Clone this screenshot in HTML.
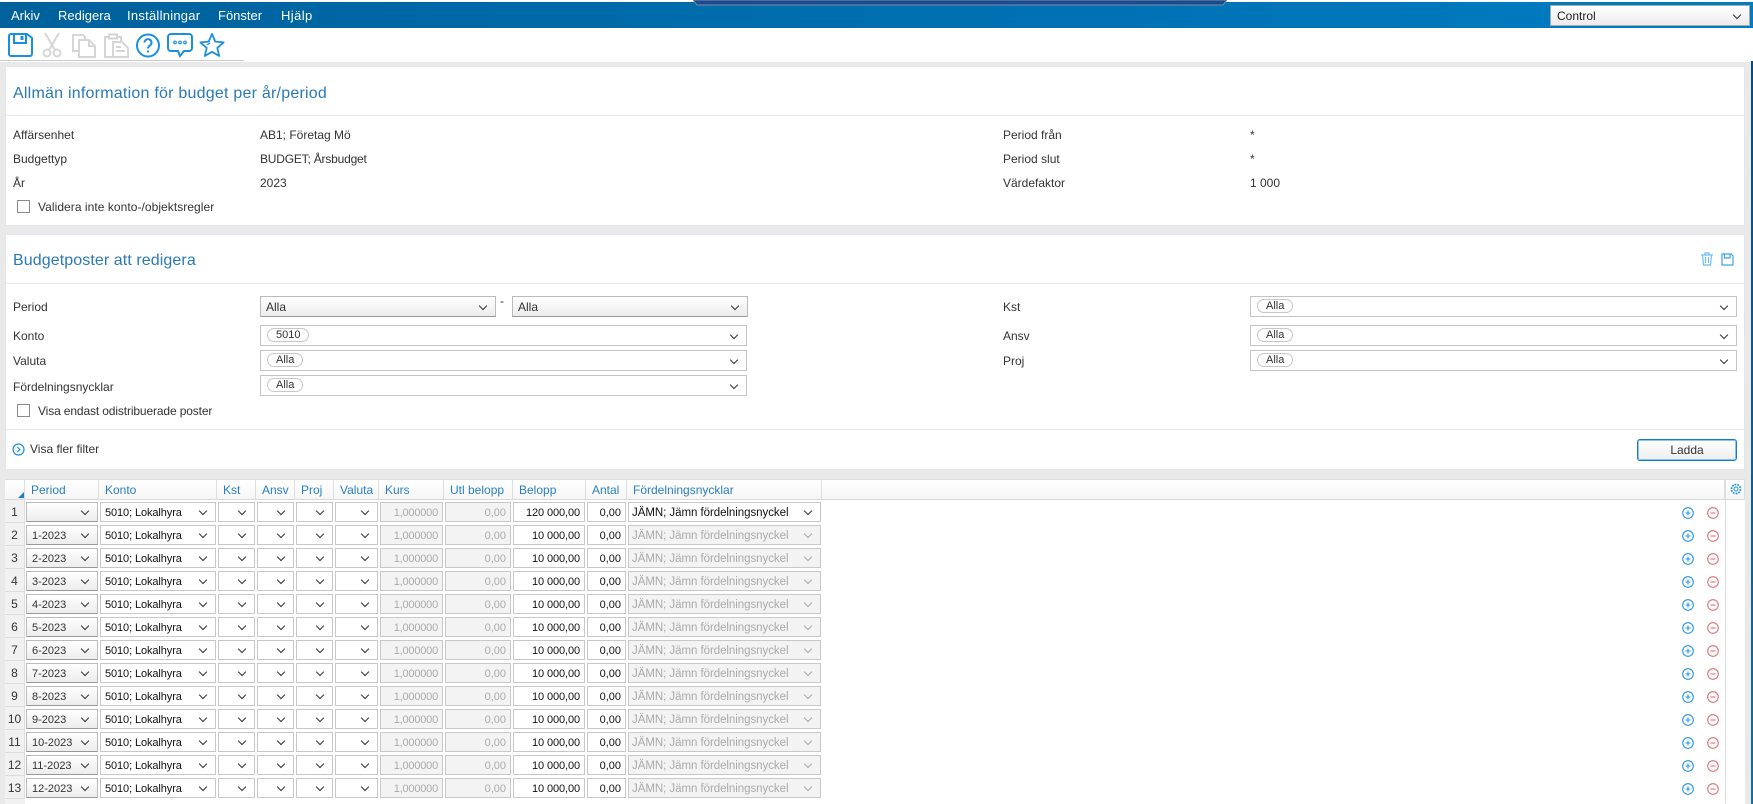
<!DOCTYPE html>
<html lang="sv"><head><meta charset="utf-8"><title>Budget</title>
<style>
html,body{margin:0;padding:0}
body{width:1753px;height:804px;overflow:hidden;background:#fff;position:relative;font:12px "Liberation Sans",sans-serif;color:#333}
div,span,svg{position:absolute;box-sizing:border-box}
.t{white-space:nowrap;line-height:16px;margin-top:1px}
#bar{left:0;top:2px;width:1753px;height:26px;background:linear-gradient(90deg,#00619c,#007cc2)}
.m{top:8px;color:#fff;font-size:13px;line-height:16px;white-space:nowrap}
.pn{left:5px;width:1740px;background:#fff;border:1px solid #e2e6ea}
.ln{left:6px;width:1738px;height:1px;background:#e6e8ea}
.h{left:13px;font-size:16px;color:#2a7ab8;line-height:20px;white-space:nowrap;margin-top:1px}
.cb{left:17px;width:13px;height:13px;border:1px solid #8a8a8a;background:#fff}
.f{left:260px;width:487px;height:21px;border:1px solid #c4c4c4;background:#fff}
.f2{left:1250px;width:487px;height:21px;border:1px solid #c4c4c4;background:#fff}
.g{background:linear-gradient(#fff,#ececec);border:1px solid #bbb;border-bottom-color:#999}
.ch::after{content:"";position:absolute;right:9px;top:50%;width:5px;height:5px;margin-top:-4px;border-right:1.2px solid #333;border-bottom:1.2px solid #333;transform:rotate(45deg)}
.dis::after{border-color:#aaa}
.pl{left:6px;top:2px;height:14px;border:1px solid #c8c8c8;border-radius:7px;line-height:12px;padding:0 8px;font-size:11px;color:#333;white-space:nowrap}
.th{top:479px;height:21px;background:linear-gradient(#fff,#f6f6f6);border-right:1px solid #ddd;border-bottom:1px solid #d8d8d8;border-top:1px solid #ddd;color:#2a7fc4;font-size:12px;line-height:20px;padding-left:6px;white-space:nowrap}
.r{left:0;width:1725px;height:23px}
.n{left:5px;top:0;width:20px;height:23px;background:#f1f1f1;border-bottom:1px solid #ddd;border-right:1px solid #ddd;text-align:center;line-height:25px;font-size:12px}
.c{top:2px;height:20px;border:1px solid #c8c8c8;background:#fff;line-height:21px;font-size:11px;color:#111;white-space:nowrap;overflow:hidden}
.p{left:26px;width:72px;padding-left:5px;background:linear-gradient(#fff,#ededed);border-color:#bbb;border-bottom-color:#999;color:#333}
.k{left:100px;width:116px;padding-left:4px;letter-spacing:-.1px}
.a{left:218px;width:37px}.b{left:257px;width:37px}.d{left:296px;width:37px}.e{left:335px;width:43px}
.ku{left:380px;width:63px;background:#f3f3f3;color:#aaa;text-align:right;padding-right:4px;letter-spacing:-.2px}
.u{left:445px;width:66px;background:#f3f3f3;color:#aaa;text-align:right;padding-right:4px}
.be{left:513px;width:72px;text-align:right;padding-right:4px;letter-spacing:-.1px}
.an{left:587px;width:39px;text-align:right;padding-right:4px}
.fo{left:628px;width:193px;padding-left:3px;font-size:11.5px;letter-spacing:-.05px}
.x{background:#f3f3f3;color:#aaa}
.pi{left:1682px;top:7px;width:12px;height:12px}
.mi{left:1707px;top:7px;width:12px;height:12px}
</style></head><body>

<div id="bar"></div>
<svg style="left:693px;top:0" width="534" height="6" viewBox="0 0 534 6"><path d="M0 0L4 5H530L534 0Z" fill="#1b4a90" stroke="#7d8ea5"/></svg>
<span class="m" style="left:11px">Arkiv</span>
<span class="m" style="left:58px">Redigera</span>
<span class="m" style="left:127px;letter-spacing:.25px">Inställningar</span>
<span class="m" style="left:218px">Fönster</span>
<span class="m" style="left:281px;letter-spacing:.4px">Hjälp</span>
<div class="g ch" style="left:1550px;top:5px;width:200px;height:21px;line-height:20px;padding-left:6px;color:#222;border-color:#aaa">Control</div>

<!-- toolbar -->
<svg style="left:7px;top:32px" width="26" height="26" viewBox="0 0 26 26" fill="none" stroke="#1a90e2" stroke-width="2"><path d="M2 4a2 2 0 0 1 2-2H20L25 6V22a2 2 0 0 1-2 2H4a2 2 0 0 1-2-2Z"/><path d="M7 2V11H19V2"/><path d="M15 4V8" stroke-width="3"/></svg>
<svg style="left:42px;top:32px" width="20" height="26" viewBox="0 0 20 26" fill="none" stroke="#d6d6d6" stroke-width="2"><path d="M3 1L13 18M17 1L7 18"/><circle cx="5" cy="21" r="3.5"/><circle cx="15" cy="21" r="3.5"/></svg>
<svg style="left:71px;top:33px" width="26" height="25" viewBox="0 0 26 25" fill="none" stroke="#d6d6d6" stroke-width="2"><path d="M8 18H2V2H12L14 4V7"/><path d="M8 7H18L24 13V24H8Z"/><path d="M18 7V13H24"/></svg>
<svg style="left:103px;top:33px" width="26" height="25" viewBox="0 0 26 25" fill="none" stroke="#d6d6d6" stroke-width="2"><path d="M9 24H2V4H6M14 4H18V8"/><rect x="6" y="1.500" width="8" height="4"/><path d="M10 9H19L25 15V24H10Z"/><path d="M13 14H18M13 18H22"/></svg>
<svg style="left:135px;top:33px" width="26" height="25" viewBox="0 0 26 25" fill="none" stroke="#1a90e2" stroke-width="2"><circle cx="13" cy="12.500" r="11"/><path d="M9.500 9.500a3.500 3.500 0 1 1 5.500 3c-1.300.9-2 1.500-2 3"/><path d="M13 17.500V19.500"/></svg>
<svg style="left:167px;top:32px" width="26" height="26" viewBox="0 0 26 26" fill="none" stroke="#1a90e2" stroke-width="2"><path d="M4 2H22a3 3 0 0 1 3 3V16a3 3 0 0 1-3 3H17L13 24L11 19H4a3 3 0 0 1-3-3V5a3 3 0 0 1 3-3Z"/><circle cx="8" cy="10.500" r="1.300" stroke-width="1.200"/><circle cx="13" cy="10.500" r="1.300" stroke-width="1.200"/><circle cx="18" cy="10.500" r="1.300" stroke-width="1.200"/></svg>
<svg style="left:199px;top:32px" width="26" height="26" viewBox="0 0 26 26" fill="none" stroke="#1a90e2" stroke-width="1.800"><path d="M13 2L16.300 9.600L24.600 10.400L18.300 15.900L20.200 24L13 19.800L5.800 24L7.700 15.900L1.400 10.400L9.700 9.600Z" stroke-linejoin="round"/><path d="M8 13L11 11" stroke-width="1.200"/></svg>
<div style="left:0;top:60px;width:244px;height:1px;background:#ccc"></div>

<!-- grey page -->
<div style="left:0;top:62px;width:1751px;height:742px;background:#e9e9e9"></div>
<div style="left:1751px;top:61px;width:2px;height:743px;background:linear-gradient(#0a4a78,#1b6a9c)"></div>

<!-- panel 1 -->
<div class="pn" style="top:66px;height:160px"></div>
<div class="ln" style="top:115px"></div>
<div class="h" style="top:83px;letter-spacing:.23px">Allmän information för budget per år/period</div>
<span class="t" style="left:13px;top:126px">Affärsenhet</span>
<span class="t" style="left:13px;top:150px">Budgettyp</span>
<span class="t" style="left:13px;top:174px">År</span>
<span class="t" style="left:260px;top:126px">AB1; Företag Mö</span>
<span class="t" style="left:260px;top:150px;letter-spacing:-.2px">BUDGET; Årsbudget</span>
<span class="t" style="left:260px;top:174px">2023</span>
<span class="t" style="left:1003px;top:126px">Period från</span>
<span class="t" style="left:1003px;top:150px">Period slut</span>
<span class="t" style="left:1003px;top:174px">Värdefaktor</span>
<span class="t" style="left:1250px;top:126px">*</span>
<span class="t" style="left:1250px;top:150px">*</span>
<span class="t" style="left:1250px;top:174px">1 000</span>
<div class="cb" style="top:200px"></div>
<span class="t" style="left:38px;top:198px;letter-spacing:.05px">Validera inte konto-/objektsregler</span>

<!-- panel 2 -->
<div class="pn" style="top:234px;height:236px"></div>
<div class="ln" style="top:283px"></div>
<div class="h" style="top:250px;letter-spacing:.09px">Budgetposter att redigera</div>
<svg style="left:1700px;top:252px" width="14" height="14" viewBox="0 0 14 14" fill="none" stroke="#6cbcf0" stroke-width="1.200"><path d="M1 3H13M5 3V1H9V3M2.500 3L3.500 13H10.500L11.500 3M5.500 5V11M8.500 5V11"/></svg>
<svg style="left:1721px;top:253px" width="13" height="13" viewBox="0 0 13 13" fill="none" stroke="#3ca4e8" stroke-width="1.200"><path d="M1 1H10L12 3V12H1Z"/><path d="M3.500 1V5H9V1"/></svg>

<span class="t" style="left:13px;top:298px">Period</span>
<span class="t" style="left:13px;top:327px">Konto</span>
<span class="t" style="left:13px;top:352px">Valuta</span>
<span class="t" style="left:13px;top:378px">Fördelningsnycklar</span>
<div class="g ch" style="left:260px;top:296px;width:236px;height:21px;line-height:20px;padding-left:5px">Alla</div>
<span class="t" style="left:500px;top:292px">-</span>
<div class="g ch" style="left:512px;top:296px;width:236px;height:21px;line-height:20px;padding-left:5px">Alla</div>
<div class="f ch" style="top:325px"><span class="pl">5010</span></div>
<div class="f ch" style="top:350px"><span class="pl">Alla</span></div>
<div class="f ch" style="top:375px"><span class="pl">Alla</span></div>
<span class="t" style="left:1003px;top:298px">Kst</span>
<span class="t" style="left:1003px;top:327px">Ansv</span>
<span class="t" style="left:1003px;top:352px">Proj</span>
<div class="f2 ch" style="top:296px"><span class="pl">Alla</span></div>
<div class="f2 ch" style="top:325px"><span class="pl">Alla</span></div>
<div class="f2 ch" style="top:350px"><span class="pl">Alla</span></div>
<div class="cb" style="top:404px"></div>
<span class="t" style="left:38px;top:402px;letter-spacing:-.13px">Visa endast odistribuerade poster</span>
<div class="ln" style="top:429px"></div>
<svg style="left:12px;top:443px" width="13" height="13" viewBox="0 0 13 13" fill="none" stroke="#1a90e2" stroke-width="1.200"><circle cx="6.500" cy="6.500" r="5.500"/><path d="M5.300 4L7.800 6.500L5.300 9"/></svg>
<span class="t" style="left:30px;top:440px">Visa fler filter</span>
<div style="left:1637px;top:439px;width:100px;height:22px;border:1px solid #0f7fc8;box-shadow:inset 0 0 0 1px #8fc4e8;border-radius:3px;background:linear-gradient(#fff,#efefef);text-align:center;line-height:20px;color:#333">Ladda</div>

<!-- table -->
<div style="left:5px;top:479px;width:1740px;height:325px;background:#fff"></div>
<div style="left:5px;top:479px;width:20px;height:325px;background:#f1f1f1"></div>
<div class="th" style="left:5px;width:20px;padding:0"></div>
<svg style="left:18px;top:492px" width="6" height="6"><path d="M6 0V6H0Z" fill="#1a7fc8"/></svg>
<div class="th" style="left:25px;width:74px">Period</div>
<div class="th" style="left:99px;width:118px">Konto</div>
<div class="th" style="left:217px;width:39px">Kst</div>
<div class="th" style="left:256px;width:39px">Ansv</div>
<div class="th" style="left:295px;width:39px">Proj</div>
<div class="th" style="left:334px;width:45px">Valuta</div>
<div class="th" style="left:379px;width:65px">Kurs</div>
<div class="th" style="left:444px;width:69px">Utl belopp</div>
<div class="th" style="left:513px;width:73px">Belopp</div>
<div class="th" style="left:586px;width:41px">Antal</div>
<div class="th" style="left:627px;width:195px">Fördelningsnycklar</div>
<div class="th" style="left:822px;width:903px"></div>
<div class="th" style="left:1725px;width:20px;border-left:1px solid #ddd"></div>
<svg style="left:1730px;top:483px" width="12" height="12" viewBox="0 0 12 12" fill="none" stroke="#2a96e0"><circle cx="6" cy="6" r="2"/><circle cx="6" cy="6" r="4.500" stroke-width="1.800" stroke-dasharray="1.800 1"/></svg>
<div style="left:1725px;top:500px;width:1px;height:304px;background:#ddd"></div>
<svg width="0" height="0" style="left:0;top:0"><defs>
<g id="pl" fill="none"><circle cx="6" cy="6" r="5.300" stroke="#2a96e0" stroke-width="1.100"/><path d="M3.500 6H8.500M6 3.500V8.500" stroke="#2a96e0" stroke-width="1.100"/></g>
<g id="mi" fill="none"><circle cx="6" cy="6" r="5.300" stroke="#e07078" stroke-width="1.100"/><path d="M3.500 6H8.500" stroke="#e07078" stroke-width="1.100"/></g>
</defs></svg>

<div class="r" style="top:500px"><span class="n">1</span><span class="c p ch"></span><span class="c k ch">5010; Lokalhyra</span><span class="c a ch"></span><span class="c b ch"></span><span class="c d ch"></span><span class="c e ch"></span><span class="c ku">1,000000</span><span class="c u">0,00</span><span class="c be">120 000,00</span><span class="c an">0,00</span><span class="c fo ch">JÄMN; Jämn fördelningsnyckel</span><svg class="pi"><use href="#pl"/></svg><svg class="mi"><use href="#mi"/></svg></div>
<div class="r" style="top:523px"><span class="n">2</span><span class="c p ch">1-2023</span><span class="c k ch">5010; Lokalhyra</span><span class="c a ch"></span><span class="c b ch"></span><span class="c d ch"></span><span class="c e ch"></span><span class="c ku">1,000000</span><span class="c u">0,00</span><span class="c be">10 000,00</span><span class="c an">0,00</span><span class="c fo x ch dis">JÄMN; Jämn fördelningsnyckel</span><svg class="pi"><use href="#pl"/></svg><svg class="mi"><use href="#mi"/></svg></div>
<div class="r" style="top:546px"><span class="n">3</span><span class="c p ch">2-2023</span><span class="c k ch">5010; Lokalhyra</span><span class="c a ch"></span><span class="c b ch"></span><span class="c d ch"></span><span class="c e ch"></span><span class="c ku">1,000000</span><span class="c u">0,00</span><span class="c be">10 000,00</span><span class="c an">0,00</span><span class="c fo x ch dis">JÄMN; Jämn fördelningsnyckel</span><svg class="pi"><use href="#pl"/></svg><svg class="mi"><use href="#mi"/></svg></div>
<div class="r" style="top:569px"><span class="n">4</span><span class="c p ch">3-2023</span><span class="c k ch">5010; Lokalhyra</span><span class="c a ch"></span><span class="c b ch"></span><span class="c d ch"></span><span class="c e ch"></span><span class="c ku">1,000000</span><span class="c u">0,00</span><span class="c be">10 000,00</span><span class="c an">0,00</span><span class="c fo x ch dis">JÄMN; Jämn fördelningsnyckel</span><svg class="pi"><use href="#pl"/></svg><svg class="mi"><use href="#mi"/></svg></div>
<div class="r" style="top:592px"><span class="n">5</span><span class="c p ch">4-2023</span><span class="c k ch">5010; Lokalhyra</span><span class="c a ch"></span><span class="c b ch"></span><span class="c d ch"></span><span class="c e ch"></span><span class="c ku">1,000000</span><span class="c u">0,00</span><span class="c be">10 000,00</span><span class="c an">0,00</span><span class="c fo x ch dis">JÄMN; Jämn fördelningsnyckel</span><svg class="pi"><use href="#pl"/></svg><svg class="mi"><use href="#mi"/></svg></div>
<div class="r" style="top:615px"><span class="n">6</span><span class="c p ch">5-2023</span><span class="c k ch">5010; Lokalhyra</span><span class="c a ch"></span><span class="c b ch"></span><span class="c d ch"></span><span class="c e ch"></span><span class="c ku">1,000000</span><span class="c u">0,00</span><span class="c be">10 000,00</span><span class="c an">0,00</span><span class="c fo x ch dis">JÄMN; Jämn fördelningsnyckel</span><svg class="pi"><use href="#pl"/></svg><svg class="mi"><use href="#mi"/></svg></div>
<div class="r" style="top:638px"><span class="n">7</span><span class="c p ch">6-2023</span><span class="c k ch">5010; Lokalhyra</span><span class="c a ch"></span><span class="c b ch"></span><span class="c d ch"></span><span class="c e ch"></span><span class="c ku">1,000000</span><span class="c u">0,00</span><span class="c be">10 000,00</span><span class="c an">0,00</span><span class="c fo x ch dis">JÄMN; Jämn fördelningsnyckel</span><svg class="pi"><use href="#pl"/></svg><svg class="mi"><use href="#mi"/></svg></div>
<div class="r" style="top:661px"><span class="n">8</span><span class="c p ch">7-2023</span><span class="c k ch">5010; Lokalhyra</span><span class="c a ch"></span><span class="c b ch"></span><span class="c d ch"></span><span class="c e ch"></span><span class="c ku">1,000000</span><span class="c u">0,00</span><span class="c be">10 000,00</span><span class="c an">0,00</span><span class="c fo x ch dis">JÄMN; Jämn fördelningsnyckel</span><svg class="pi"><use href="#pl"/></svg><svg class="mi"><use href="#mi"/></svg></div>
<div class="r" style="top:684px"><span class="n">9</span><span class="c p ch">8-2023</span><span class="c k ch">5010; Lokalhyra</span><span class="c a ch"></span><span class="c b ch"></span><span class="c d ch"></span><span class="c e ch"></span><span class="c ku">1,000000</span><span class="c u">0,00</span><span class="c be">10 000,00</span><span class="c an">0,00</span><span class="c fo x ch dis">JÄMN; Jämn fördelningsnyckel</span><svg class="pi"><use href="#pl"/></svg><svg class="mi"><use href="#mi"/></svg></div>
<div class="r" style="top:707px"><span class="n">10</span><span class="c p ch">9-2023</span><span class="c k ch">5010; Lokalhyra</span><span class="c a ch"></span><span class="c b ch"></span><span class="c d ch"></span><span class="c e ch"></span><span class="c ku">1,000000</span><span class="c u">0,00</span><span class="c be">10 000,00</span><span class="c an">0,00</span><span class="c fo x ch dis">JÄMN; Jämn fördelningsnyckel</span><svg class="pi"><use href="#pl"/></svg><svg class="mi"><use href="#mi"/></svg></div>
<div class="r" style="top:730px"><span class="n">11</span><span class="c p ch">10-2023</span><span class="c k ch">5010; Lokalhyra</span><span class="c a ch"></span><span class="c b ch"></span><span class="c d ch"></span><span class="c e ch"></span><span class="c ku">1,000000</span><span class="c u">0,00</span><span class="c be">10 000,00</span><span class="c an">0,00</span><span class="c fo x ch dis">JÄMN; Jämn fördelningsnyckel</span><svg class="pi"><use href="#pl"/></svg><svg class="mi"><use href="#mi"/></svg></div>
<div class="r" style="top:753px"><span class="n">12</span><span class="c p ch">11-2023</span><span class="c k ch">5010; Lokalhyra</span><span class="c a ch"></span><span class="c b ch"></span><span class="c d ch"></span><span class="c e ch"></span><span class="c ku">1,000000</span><span class="c u">0,00</span><span class="c be">10 000,00</span><span class="c an">0,00</span><span class="c fo x ch dis">JÄMN; Jämn fördelningsnyckel</span><svg class="pi"><use href="#pl"/></svg><svg class="mi"><use href="#mi"/></svg></div>
<div class="r" style="top:776px"><span class="n">13</span><span class="c p ch">12-2023</span><span class="c k ch">5010; Lokalhyra</span><span class="c a ch"></span><span class="c b ch"></span><span class="c d ch"></span><span class="c e ch"></span><span class="c ku">1,000000</span><span class="c u">0,00</span><span class="c be">10 000,00</span><span class="c an">0,00</span><span class="c fo x ch dis">JÄMN; Jämn fördelningsnyckel</span><svg class="pi"><use href="#pl"/></svg><svg class="mi"><use href="#mi"/></svg></div>
</body></html>
